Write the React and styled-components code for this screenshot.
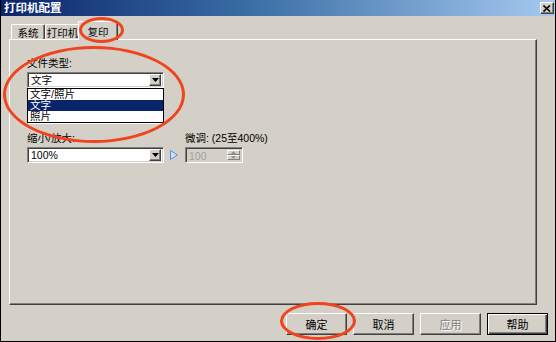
import styled, { createGlobalStyle } from "styled-components";

const GlobalStyle = createGlobalStyle`
  html, body { margin: 0; padding: 0; background: #d4d0c8; }
  body {
    font-family: "Liberation Sans", "Noto Sans CJK SC", sans-serif;
    font-size: 11px;
    color: #000;
  }
`;

const raised = `
  border: 1px solid;
  border-color: #fff #404040 #404040 #fff;
  box-shadow: inset -1px -1px 0 #808080;
`;

const sunken = `
  border: 1px solid;
  border-color: #808080 #fff #fff #808080;
  box-shadow: inset 1px 1px 0 #404040, inset -1px -1px 0 #d4d0c8;
`;

const Window = styled.div`
  position: relative;
  width: 556px;
  height: 342px;
  box-sizing: border-box;
  border: 1px solid #000;
  border-top: none;
  background: #d4d0c8;
  display: flex;
  flex-direction: column;
  overflow: hidden;
`;

const TitleBar = styled.div`
  height: 16px;
  margin: 0 -1px;
  display: flex;
  align-items: center;
  justify-content: space-between;
  padding: 0 2px 0 4px;
  background: linear-gradient(90deg, #0a246a 0%, #3a6ea5 45%, #a6caf0 100%);
`;

const Title = styled.span`
  color: #fff;
  font-weight: bold;
  font-size: 11.5px;
  line-height: 16px;
`;

const CloseButton = styled.div`
  width: 12px;
  height: 10px;
  ${raised}
  background: #d4d0c8;
  display: flex;
  align-items: center;
  justify-content: center;
`;

const TabStrip = styled.div`
  display: flex;
  align-items: flex-end;
  height: 23px;
  padding-left: 10px;
`;

const Tab = styled.div`
  position: relative;
  width: ${p => p.$w}px;
  height: ${p => (p.$active ? 19 : 15)}px;
  margin: 0 ${p => (p.$active ? -2 : 0)}px -${p => (p.$active ? 1 : 0)}px;
  z-index: ${p => (p.$active ? 2 : 1)};
  box-sizing: border-box;
  display: flex;
  align-items: center;
  justify-content: center;
  background: #d4d0c8;
  border: 1px solid;
  border-color: #fff #404040 transparent #fff;
  border-bottom: none;
  box-shadow: inset -1px 0 0 #808080;
  border-radius: 2px 2px 0 0;
  font-size: 10.5px;
  white-space: nowrap;
`;

const Panel = styled.div`
  margin-left: 8px;
  width: 528px;
  height: 266px;
  box-sizing: border-box;
  ${raised}
  padding: 17px 0 0 17px;
  display: flex;
  flex-direction: column;
`;

const Field = styled.div`
  position: relative;
  display: flex;
  flex-direction: column;
  gap: 2px;
  margin-top: ${p => p.$top || 0}px;
`;

const Label = styled.div`
  height: 13px;
  line-height: 13px;
  font-size: 10.5px;
  white-space: nowrap;
`;

const Spacer = styled.div`
  height: 13px;
`;

const Combo = styled.div`
  width: 137px;
  height: 16px;
  box-sizing: border-box;
  ${sunken}
  background: #fff;
  display: flex;
  align-items: center;
  padding: 2px;
`;

const ComboText = styled.span`
  flex: 1;
  padding-left: 1px;
  font-size: 10.5px;
  line-height: 12px;
`;

const ArrowButton = styled.div`
  width: 12px;
  height: 12px;
  box-sizing: border-box;
  ${raised}
  background: #d4d0c8;
  display: flex;
  align-items: center;
  justify-content: center;
`;

const DropList = styled.div`
  position: absolute;
  top: 100%;
  left: 0;
  width: 137px;
  box-sizing: border-box;
  border: 1px solid #000;
  background: #fff;
  z-index: 5;
`;

const ListItem = styled.div`
  height: 11px;
  line-height: 11px;
  padding-left: 2px;
  font-size: 10.5px;
  background: ${p => (p.$selected ? "#0a246a" : "#fff")};
  color: ${p => (p.$selected ? "#fff" : "#000")};
`;

const Row = styled.div`
  display: flex;
  align-items: flex-end;
  margin-top: 8px;
`;

const Pointer = styled.div`
  width: 8px;
  height: 16px;
  margin: 0 7px 0 6px;
  display: flex;
  align-items: center;
`;

const Spin = styled.div`
  width: 58px;
  height: 16px;
  box-sizing: border-box;
  ${sunken}
  background: #d4d0c8;
  display: flex;
  padding: 2px;
`;

const SpinText = styled.span`
  flex: 1;
  color: #a0a0a0;
  font-size: 10.5px;
  line-height: 12px;
  padding-left: 1px;
`;

const SpinButtons = styled.div`
  display: flex;
  flex-direction: column;
  width: 13px;
`;

const SpinButton = styled.div`
  flex: 1;
  box-sizing: border-box;
  border: 1px solid;
  border-color: #fff #808080 #808080 #fff;
  background: #d4d0c8;
  display: flex;
  align-items: center;
  justify-content: center;
`;

const Buttons = styled.div`
  display: flex;
  justify-content: flex-end;
  gap: 6px;
  padding: 8px 7px 0 0;
`;

const Button = styled.div`
  width: 61px;
  height: 22px;
  box-sizing: border-box;
  ${raised}
  ${p => p.$default && `
    border: 1px solid #000;
    box-shadow: inset 1px 1px 0 #fff, inset -1px -1px 0 #404040, inset -2px -2px 0 #808080;
  `}
  display: flex;
  align-items: center;
  justify-content: center;
  font-size: 11px;
  color: ${p => (p.$disabled ? "#808080" : "#000")};
  text-shadow: ${p => (p.$disabled ? "1px 1px 0 #fff" : "none")};
`;

const Ring = styled.div`
  position: absolute;
  left: ${p => p.$x}px;
  top: ${p => p.$y}px;
  width: ${p => p.$w}px;
  height: ${p => p.$h}px;
  box-sizing: border-box;
  border: 3px solid #f0431e;
  border-radius: 50%;
  pointer-events: none;
  z-index: 10;
`;

const Down = ({ color = "#000", w = 7, h = 4 }) => (
  <svg width={w} height={h} viewBox={`0 0 ${w} ${h}`}>
    <path d={`M0 0H${w}L${w / 2} ${h}Z`} fill={color} />
  </svg>
);

const Up = ({ color = "#000", w = 5, h = 3 }) => (
  <svg width={w} height={h} viewBox={`0 0 ${w} ${h}`}>
    <path d={`M0 ${h}H${w}L${w / 2} 0Z`} fill={color} />
  </svg>
);

export default function App() {
  return (
    <>
      <GlobalStyle />
      <Window>
        <TitleBar>
          <Title>打印机配置</Title>
          <CloseButton>
            <svg width="8" height="7" viewBox="0 0 8 7">
              <path d="M0.5 0.5L7 6.5M7 0.5L0.5 6.5" stroke="#000" strokeWidth="1.6" />
            </svg>
          </CloseButton>
        </TitleBar>

        <TabStrip>
          <Tab $w={34}>系统</Tab>
          <Tab $w={35}>打印机</Tab>
          <Tab $w={40} $active>复印</Tab>
        </TabStrip>

        <Panel>
          <Field>
            <Label>文件类型:</Label>
            <Combo>
              <ComboText>文字</ComboText>
              <ArrowButton><Down /></ArrowButton>
            </Combo>
            <DropList>
              <ListItem>文字/照片</ListItem>
              <ListItem $selected>文字</ListItem>
              <ListItem>照片</ListItem>
            </DropList>
          </Field>

          <Field $top={5}>
            <Spacer />
            <Combo>
              <ComboText />
              <ArrowButton><Down /></ArrowButton>
            </Combo>
          </Field>

          <Row>
            <Field>
              <Label>缩小/放大:</Label>
              <Combo>
                <ComboText>100%</ComboText>
                <ArrowButton><Down /></ArrowButton>
              </Combo>
            </Field>
            <Pointer>
              <svg width="8" height="10" viewBox="0 0 8 10">
                <path d="M0.5 0.5L7.5 5L0.5 9.5Z" fill="#cfe0f5" stroke="#5b8fd6" />
              </svg>
            </Pointer>
            <Field>
              <Label>微调: (25至400%)</Label>
              <Spin>
                <SpinText>100</SpinText>
                <SpinButtons>
                  <SpinButton><Up color="#909090" /></SpinButton>
                  <SpinButton><Down color="#909090" w={5} h={3} /></SpinButton>
                </SpinButtons>
              </Spin>
            </Field>
          </Row>
        </Panel>

        <Buttons>
          <Button>确定</Button>
          <Button>取消</Button>
          <Button $disabled>应用</Button>
          <Button $default>帮助</Button>
        </Buttons>

        <Ring $x={78} $y={17} $w={45} $h={26} />
        <Ring $x={2} $y={46} $w={182} $h={97} />
        <Ring $x={279} $y={302} $w={76} $h={38} />
      </Window>
    </>
  );
}
